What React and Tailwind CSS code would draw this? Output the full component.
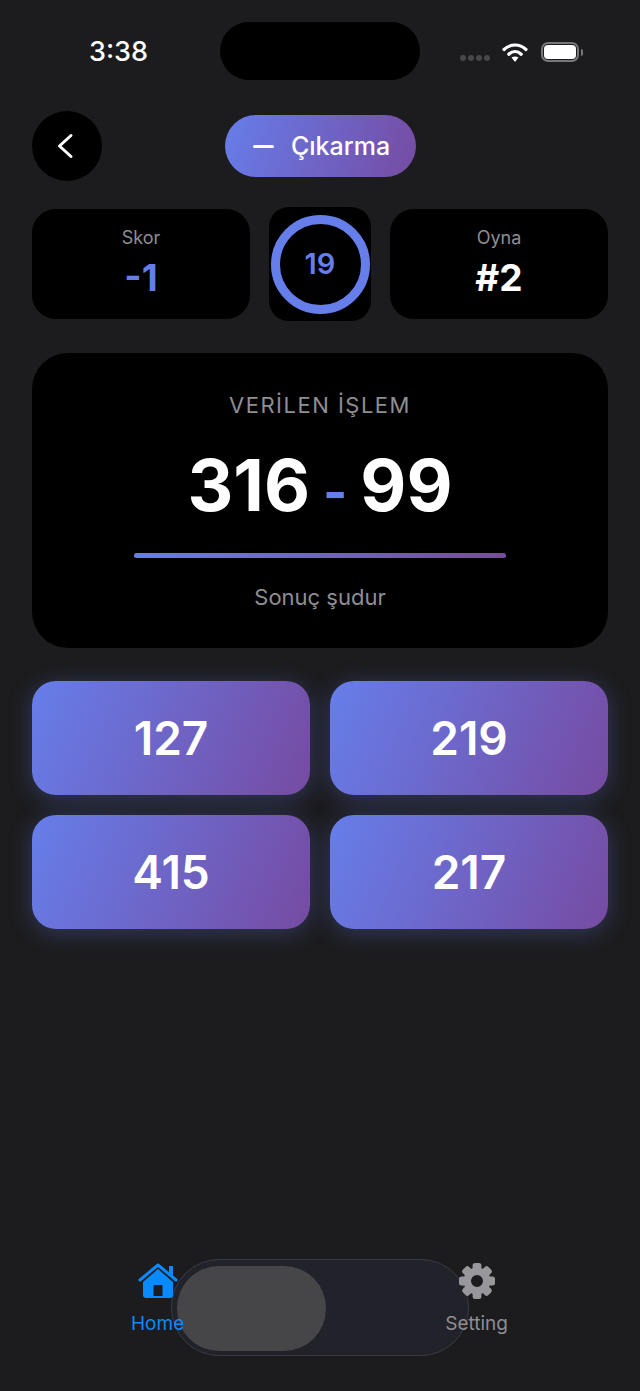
function StatusBar() {
  return (
    <div className="flex h-[111px] justify-between items-start relative">
      <span className="ml-[89px] mt-[36px] text-[27px] leading-[32px] font-medium text-white">3:38</span>
      <div className="absolute left-[220px] top-[22px] w-[200px] h-[58px] rounded-[29px] bg-black" />
      <div className="flex items-center mt-[41px] mr-[57px] h-[22px]">
        <div className="flex gap-[2px] mr-[12px] mt-[12px]">
          <span className="w-[6px] h-[6px] rounded-full bg-[#48484a]" />
          <span className="w-[6px] h-[6px] rounded-full bg-[#48484a]" />
          <span className="w-[6px] h-[6px] rounded-full bg-[#48484a]" />
          <span className="w-[6px] h-[6px] rounded-full bg-[#48484a]" />
        </div>
        <svg width="26" height="21" viewBox="0 0 26 21" fill="none" className="mr-[13px]">
          <path d="M2 7.5C8.5 1.5 17.5 1.5 24 7.5" stroke="white" strokeWidth="3.2" strokeLinecap="round" />
          <path d="M6.8 12.2C10.5 8.8 15.5 8.8 19.2 12.2" stroke="white" strokeWidth="3.2" strokeLinecap="round" />
          <path d="M9.5 15.6C11.5 14.2 14.5 14.2 16.5 15.6L13 20z" fill="white" />
        </svg>
        <div className="flex items-center">
          <div className="w-[38px] h-[20px] rounded-[7px] border-2 border-[#77777b] p-[1px]">
            <div className="w-full h-full rounded-[4px] bg-white" />
          </div>
          <span className="w-[2px] h-[7px] ml-[2px] rounded-r bg-[#77777b]" />
        </div>
      </div>
    </div>
  );
}

function Header() {
  return (
    <div className="relative flex justify-center h-[70px] px-8">
      <button className="absolute left-[32px] top-0 w-[70px] h-[70px] rounded-full bg-black flex items-center justify-center">
        <svg width="18" height="26" viewBox="0 0 18 26" fill="none" className="mr-[4px]">
          <path d="M15 2.5L3.5 13L15 23.5" stroke="white" strokeWidth="3" strokeLinecap="round" strokeLinejoin="round" />
        </svg>
      </button>
      <div className="mt-[4px] w-[191px] h-[62px] pl-[3px] rounded-[31px] bg-[linear-gradient(108deg,#667eea,#764ba2)] flex items-center justify-center text-white">
        <span className="w-[21px] h-[3px] rounded-full bg-white mr-[17px]" />
        <span className="text-[25px] leading-[32px] font-medium">Çıkarma</span>
      </div>
    </div>
  );
}

function StatCard({ label, value, valueColor }) {
  return (
    <div className="flex-1 h-[110px] rounded-[24px] bg-black flex flex-col items-center">
      <span className="mt-[19px] text-[18px] leading-[20px] text-[#8e8e93]">{label}</span>
      <span className={`mt-[8px] text-[37px] leading-[44px] font-bold ${valueColor}`}>{value}</span>
    </div>
  );
}

function AnswerButton({ value }) {
  return (
    <button className="h-[114px] rounded-[24px] bg-[linear-gradient(112deg,#667eea,#764ba2)] shadow-[0_4px_24px_rgba(102,126,234,0.3)] flex items-center justify-center text-white text-[46px] font-semibold">
      {value}
    </button>
  );
}

function GearIcon() {
  const angles = [0, 45, 90, 135];
  return (
    <svg width="38" height="38" viewBox="-19 -19 38 38" fill="#98989c">
      {angles.map((a) => (
        <g key={a} transform={`rotate(${a})`}>
          <rect x="-4.4" y="-18" width="8.8" height="8" rx="2.5" />
          <rect x="-4.4" y="10" width="8.8" height="8" rx="2.5" />
        </g>
      ))}
      <circle r="9.7" fill="none" stroke="#98989c" strokeWidth="7.4" />
    </svg>
  );
}

function TabBar() {
  return (
    <div className="relative mt-auto h-[132px] flex justify-between px-[131px] pt-[3px]">
      <div className="absolute left-[171px] top-[0px] w-[298px] h-[97px] rounded-[48px] border border-[#3a3a44] bg-[#22222a]">
        <div className="mt-[6px] ml-[5px] w-[149px] h-[85px] rounded-[42px] bg-[#464648]" />
      </div>
      <div className="relative flex flex-col items-center text-[#0a8aff]">
        <svg width="42" height="37" viewBox="0 0 42 37" fill="#0a8aff">
          <path d="M3 18L21 3L39 18" fill="none" stroke="#0a8aff" strokeWidth="3" strokeLinecap="round" strokeLinejoin="round" />
          <path d="M32 4h4v10l-4-3.5z" />
          <path fillRule="evenodd" d="M21 7L36 20V33a3 3 0 0 1-3 3H9a3 3 0 0 1-3-3V20zM16.5 23h9v11h-9z" />
        </svg>
        <span className="mt-[13px] text-[19px] leading-[24px]">Home</span>
      </div>
      <div className="relative flex flex-col items-center text-[#8e8e93] mr-[1px]">
        <GearIcon />
        <span className="mt-[12px] text-[19px] leading-[24px]">Setting</span>
      </div>
    </div>
  );
}

export default function App() {
  return (
    <div className="min-h-[1391px] bg-[#1c1c1e] flex flex-col font-['Inter',sans-serif]">
      <StatusBar />
      <Header />
      <div className="flex items-center gap-[19px] px-8 mt-[26px]">
        <StatCard label="Skor" value="-1" valueColor="text-[#667eea]" />
        <div className="w-[102px] h-[114px] rounded-[20px] bg-black flex items-center justify-center">
          <div className="w-[99px] h-[99px] rounded-full border-[9px] border-[#667eea] flex items-center justify-center text-[#667eea] text-[29px] font-semibold">
            19
          </div>
        </div>
        <StatCard label="Oyna" value="#2" valueColor="text-white" />
      </div>
      <div className="mx-8 mt-[32px] h-[295px] rounded-[36px] bg-black flex flex-col items-center">
        <span className="mt-[37px] text-[22px] leading-[30px] tracking-[1.5px] text-[#8e8e93]">VERİLEN İŞLEM</span>
        <div className="mt-[25px] text-[71px] leading-[80px] font-bold text-white">
          316<span className="mx-[13px] text-[52px] text-[#667eea]">-</span>99
        </div>
        <div className="mt-[20px] w-[372px] h-[5px] rounded-full bg-[linear-gradient(90deg,#667eea,#764ba2)]" />
        <span className="mt-[24px] text-[22px] leading-[30px] text-[#8e8e93]">Sonuç şudur</span>
      </div>
      <div className="grid grid-cols-2 gap-x-[20px] gap-y-[20px] px-8 mt-[33px]">
        <AnswerButton value="127" />
        <AnswerButton value="219" />
        <AnswerButton value="415" />
        <AnswerButton value="217" />
      </div>
      <TabBar />
    </div>
  );
}
